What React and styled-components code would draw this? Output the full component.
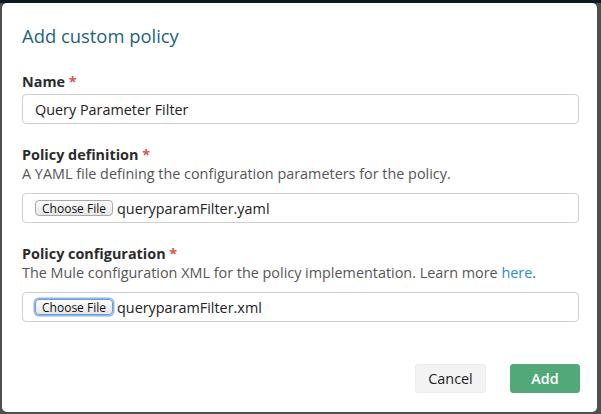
import styled, { createGlobalStyle } from "styled-components";

const GlobalStyle = createGlobalStyle`
    html, body {
        margin: 0;
        padding: 0;
        height: 414px;
        overflow: hidden;
    }
    body {
        background: linear-gradient(#0c1b22 0 3px, #4d4f50 3px);
        font-family: "Open Sans", "Liberation Sans", sans-serif;
    }
`

const Backdrop = styled.div`
    padding: 3px 4px 2px 2px;
    height: 414px;
    box-sizing: border-box;
    display: flex;
`

const Modal = styled.div`
    flex: 1;
    background: #fff;
    border-radius: 5px;
    display: flex;
    flex-direction: column;
`

const Header = styled.div`
    padding: 20px 20px 0 20px;

    h2 {
        margin: 0;
        font-size: 18.4px;
        font-weight: 400;
        color: #22637e;
        line-height: 25px;
    }
`

const Body = styled.div`
    padding: 24px 18px 0 20px;
    display: flex;
    flex-direction: column;
    gap: 21px;
`

const Field = styled.div`
    display: flex;
    flex-direction: column;
`

const Label = styled.label`
    font-size: 14.4px;
    font-weight: 700;
    color: #2b2b2b;
    line-height: 19px;

    span {
        color: #d9534f;
    }
`

const Help = styled.p`
    margin: 0;
    font-size: 14.4px;
    color: #555;
    line-height: 20px;

    a {
        color: #2a8bd0;
        text-decoration: none;
    }
`

const TextInput = styled.div`
    margin-top: ${p => p.$gap || 0}px;
    height: 30px;
    box-sizing: border-box;
    border: 1px solid #cfcfcf;
    border-radius: 4px;
    padding: 0 12px;
    display: flex;
    align-items: center;
    gap: 4px;
    font-size: 14.4px;
    color: #222;
`

const ChooseButton = styled.span`
    display: inline-flex;
    align-items: center;
    justify-content: center;
    width: 78px;
    height: 16px;
    box-sizing: border-box;
    border: 1px solid ${p => p.$focused ? "#6d9bd8" : "#a8a8a8"};
    box-shadow: ${p => p.$focused ? "0 0 0 1.5px #8fb6ea" : "none"};
    border-radius: 4px;
    background: linear-gradient(#fdfdfd, #e6e6e6);
    font-size: 12px;
    color: #111;
`

const Footer = styled.div`
    margin-top: auto;
    padding: 0 17px 19px 0;
    display: flex;
    justify-content: flex-end;
    gap: 24px;
`

const Button = styled.button`
    height: 29px;
    width: ${p => p.$primary ? 70 : 71}px;
    border-radius: 3px;
    font-family: inherit;
    font-size: 14.4px;
    font-weight: ${p => p.$primary ? 600 : 400};
    border: 1px solid ${p => p.$primary ? "#52a878" : "#ececec"};
    background: ${p => p.$primary ? "#52a878" : "#f3f3f3"};
    color: ${p => p.$primary ? "#fff" : "#222"};
    padding: 0;
`

function App() {
    return (
        <>
            <GlobalStyle />
            <Backdrop>
                <Modal>
                    <Header>
                        <h2>Add custom policy</h2>
                    </Header>

                    <Body>
                        <Field>
                            <Label>Name <span>*</span></Label>
                            <TextInput $gap={3}>Query Parameter Filter</TextInput>
                        </Field>

                        <Field>
                            <Label>Policy definition <span>*</span></Label>
                            <Help>A YAML file defining the configuration parameters for the policy.</Help>
                            <TextInput $gap={9}>
                                <ChooseButton>Choose File</ChooseButton>
                                queryparamFilter.yaml
                            </TextInput>
                        </Field>

                        <Field>
                            <Label>Policy configuration <span>*</span></Label>
                            <Help>The Mule configuration XML for the policy implementation. Learn more <a href="#">here</a>.</Help>
                            <TextInput $gap={9}>
                                <ChooseButton $focused>Choose File</ChooseButton>
                                queryparamFilter.xml
                            </TextInput>
                        </Field>
                    </Body>

                    <Footer>
                        <Button>Cancel</Button>
                        <Button $primary>Add</Button>
                    </Footer>
                </Modal>
            </Backdrop>
        </>
    )
}

export default App;
